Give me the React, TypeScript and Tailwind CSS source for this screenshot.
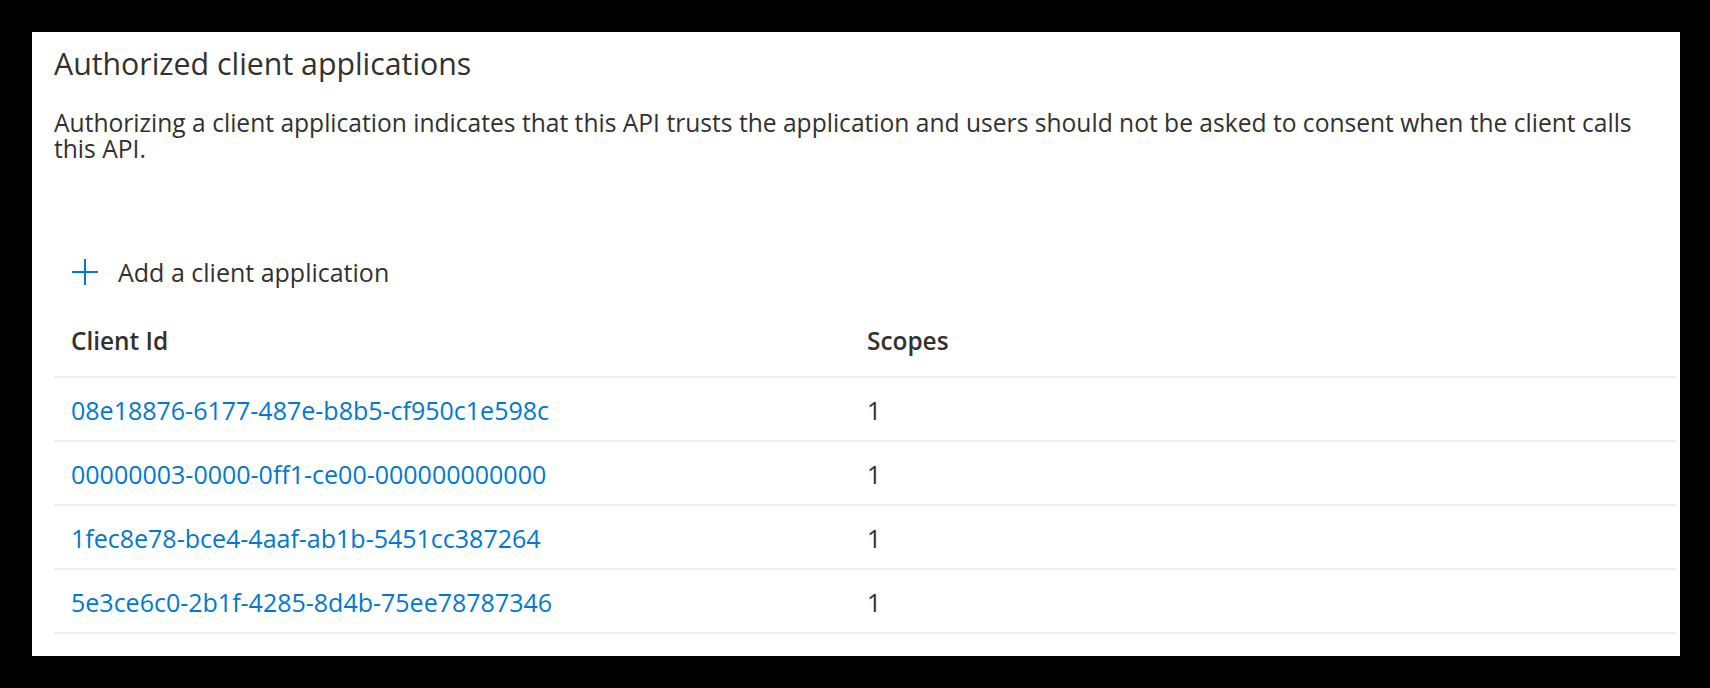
import React from "react";

const rows = [
  { id: "08e18876-6177-487e-b8b5-cf950c1e598c", scopes: "1" },
  { id: "00000003-0000-0ff1-ce00-000000000000", scopes: "1" },
  { id: "1fec8e78-bce4-4aaf-ab1b-5451cc387264", scopes: "1" },
  { id: "5e3ce6c0-2b1f-4285-8d4b-75ee78787346", scopes: "1" },
];

export default function App() {
  return (
    <div
      className="w-[1710px] h-[688px] bg-black pt-[32px] pl-[32px]"
      style={{ fontFamily: '"Open Sans", "Noto Sans", sans-serif' }}
    >
      <div className="w-[1648px] h-[624px] bg-white pl-[22px] pr-[4px] pt-[14px] text-[#323130]">
        <h2 className="text-[30.3px] leading-[36px] font-normal">Authorized client applications</h2>
        <p className="mt-[28px] text-[24.6px] leading-[26px] pr-[22px]">
          Authorizing a client application indicates that this API trusts the application and users should not be asked to consent when the client calls this API.
        </p>
        <button className="mt-[90px] ml-[17px] h-[40px] flex items-center gap-[19px] text-[25px] leading-[26px] text-[#323130]">
          <svg width="28" height="28" viewBox="0 0 28 28" fill="none">
            <path d="M14 1v26M1 14h26" stroke="#0078d4" strokeWidth="2" />
          </svg>
          <span>Add a client application</span>
        </button>
        <div className="flex pt-[36px] pb-[22px] border-b-2 border-[#f0efee] text-[24.4px] leading-[26px] font-semibold">
          <div className="w-[796px] pl-[17px]">Client Id</div>
          <div className="flex-1 pl-[17px]">Scopes</div>
        </div>
        {rows.map((r) => (
          <div
            key={r.id}
            className="flex items-center h-[64px] pt-[2px] border-b-2 border-[#f0efee] text-[25px] leading-[26px]"
          >
            <div className="w-[796px] pl-[17px]">
              <a className="text-[#0078d4] cursor-pointer">{r.id}</a>
            </div>
            <div className="flex-1 pl-[17px]">{r.scopes}</div>
          </div>
        ))}
      </div>
    </div>
  );
}
